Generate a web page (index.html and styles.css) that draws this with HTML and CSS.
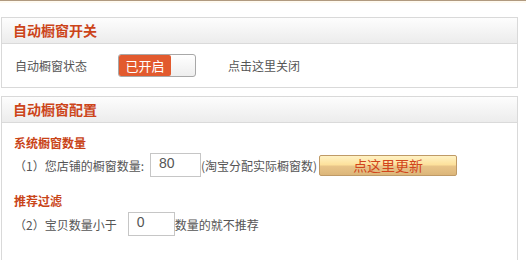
FILE: index.html
```html
<!DOCTYPE html>
<html>
<head>
<meta charset="utf-8">
<link rel="stylesheet" href="styles.css">
</head>
<body>
<div class="topbar"></div>
<div class="page">
  <div class="box">
    <div class="box-head">自动橱窗开关</div>
    <div class="box-body switch-body">
      <span class="label">自动橱窗状态</span>
      <span class="toggle"><span class="toggle-on">已开启</span></span>
      <span class="link">点击这里关闭</span>
    </div>
  </div>
  <div class="box second">
    <div class="box-head">自动橱窗配置</div>
    <div class="box-body config-body">
      <div class="sub">系统橱窗数量</div>
      <div class="row">
        <span>（1）您店铺的橱窗数量:</span>
        <span class="input w51">80</span>
        <span>(淘宝分配实际橱窗数)</span>
        <span class="btn">点这里更新</span>
      </div>
      <div class="sub sub2">推荐过滤</div>
      <div class="row row2">
        <span>（2）宝贝数量小于</span>
        <span class="input w47">0</span>
        <span>数量的就不推荐</span>
      </div>
    </div>
  </div>
</div>
</body>
</html>
```
FILE: styles.css
```css
html, body {
  margin: 0;
  padding: 0;
  background: #ffffff;
}
body {
  width: 526px;
  height: 260px;
  overflow: hidden;
  font-family: "Noto Sans CJK SC", "Liberation Sans", sans-serif;
  font-size: 12px;
  color: #555555;
}
.topbar {
  height: 2px;
  border-top: 1px solid #b09a80;
  background: #fffaf0;
}
.page {
  padding: 14px 0 0 1px;
  width: 517px;
}
.box {
  border: 1px solid #d9d9d9;
  background: #ffffff;
}
.second {
  margin-top: 8px;
}
.box-head {
  height: 25px;
  line-height: 25px;
  padding-left: 11px;
  background: linear-gradient(#fdfdfd, #ececec);
  border-bottom: 1px solid #dadada;
  color: #cc4419;
  font-size: 14px;
  font-weight: bold;
}
.switch-body {
  height: 43px;
  display: flex;
  align-items: center;
  padding-left: 13px;
}
.label {
  width: 103px;
}
.toggle {
  width: 76px;
  height: 21px;
  border: 1px solid #a8a8a8;
  border-radius: 3px;
  background: linear-gradient(#ffffff, #eeeeee);
  display: flex;
}
.toggle-on {
  width: 52px;
  height: 21px;
  line-height: 21px;
  background: #e25a2e;
  border-radius: 2px;
  color: #ffffff;
  font-size: 13px;
  text-align: center;
}
.link {
  margin-left: 32px;
  color: #555555;
}
.config-body {
  padding: 10px 0 40px 12px;
}
.sub {
  height: 20px;
  line-height: 20px;
  color: #c94418;
  font-weight: bold;
  font-size: 12px;
}
.sub2 {
  margin-top: 14px;
}
.row {
  display: flex;
  align-items: center;
  height: 24px;
}
.row2 {
  margin-top: 1px;
}
.input {
  box-sizing: border-box;
  height: 24px;
  border: 1px solid #c6c6c6;
  padding: 0 0 0 8px;
  font-family: "Liberation Sans", Arial, sans-serif;
  font-size: 14px;
  line-height: 18px;
  color: #555555;
  align-self: flex-start;
}
.w51 { width: 51px; margin-left: 6px; }
.w47 { width: 47px; margin-left: 11px; }
.btn {
  box-sizing: border-box;
  width: 138px;
  height: 21px;
  margin-left: 2px;
  border: 1px solid #bf9a66;
  border-radius: 2px;
  background: linear-gradient(#fff2c4 0%, #fde19c 45%, #e8c488 55%, #dcb67a 100%);
  color: #d2461c;
  font-size: 14px;
  line-height: 19px;
  text-align: center;
}
```
